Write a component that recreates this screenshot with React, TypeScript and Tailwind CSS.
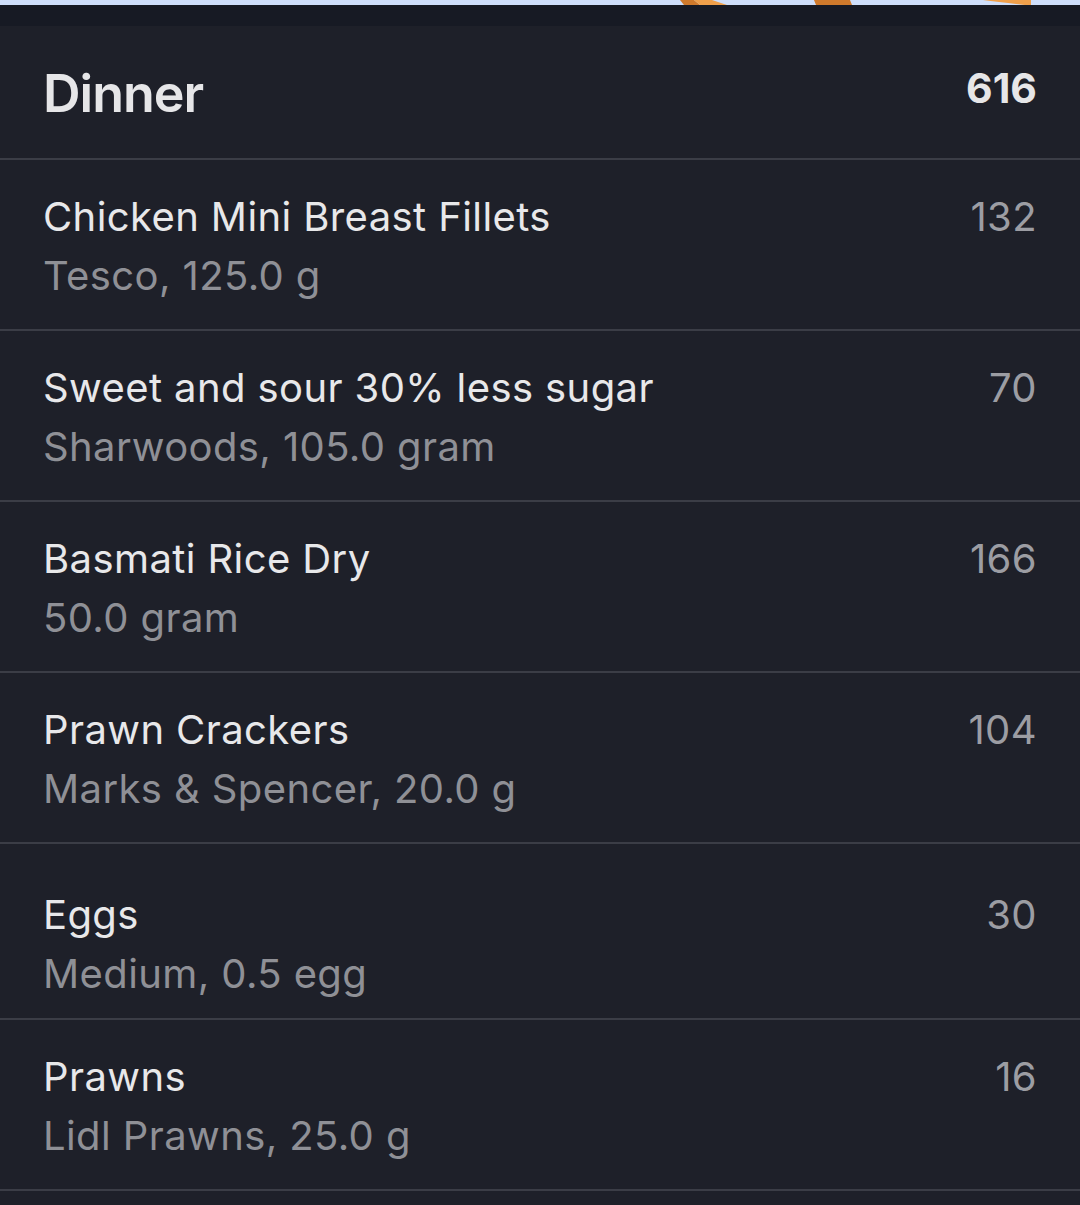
import React from "react";

type Entry = {
  name: string;
  detail: string;
  kcal: number;
  pad?: string;
};

const entries: Entry[] = [
  { name: "Chicken Mini Breast Fillets", detail: "Tesco, 125.0 g", kcal: 132 },
  { name: "Sweet and sour 30% less sugar", detail: "Sharwoods, 105.0 gram", kcal: 70 },
  { name: "Basmati Rice Dry", detail: "50.0 gram", kcal: 166 },
  { name: "Prawn Crackers", detail: "Marks & Spencer, 20.0 g", kcal: 104 },
  { name: "Eggs", detail: "Medium, 0.5 egg", kcal: 30, pad: "pt-[41px] pb-[15px]" },
  { name: "Prawns", detail: "Lidl Prawns, 25.0 g", kcal: 16 },
];

function TopArt() {
  // bottom edge of the illustration above, cropped by the panel
  return (
    <div className="h-[5px] w-full overflow-hidden bg-[#cfdffb]">
      <svg width="1080" height="5" viewBox="0 0 1080 5" className="block">
        <path d="M680 0 L694 0 L700 5 L684 5 Z" fill="#d07a2c" />
        <path d="M694 0 L712 0 L727 5 L700 5 Z" fill="#f0a04b" />
        <path d="M814 0 L850 0 L852 5 L816 5 Z" fill="#d07a2c" />
        <path d="M983 0 L1031 0 L1031 5 L1025 5 Q1000 2 983 0 Z" fill="#f0a04b" />
      </svg>
    </div>
  );
}

function Row({ e }: { e: Entry }) {
  return (
    <div
      className={`flex items-start justify-between border-b-2 border-[#3b3d46] pl-[43px] pr-[43px] tracking-[0.4px] ${
        e.pad ?? "pt-[27px] pb-[24px]"
      }`}
    >
      <div className="min-w-0">
        <div className="text-[40px] leading-[59px] text-[#e8e8ea]">{e.name}</div>
        <div className="text-[40px] leading-[59px] text-[#8f9096]">{e.detail}</div>
      </div>
      <div className="text-[40px] leading-[59px] text-[#9c9da3]">{e.kcal}</div>
    </div>
  );
}

export default function App() {
  return (
    <div
      className="min-h-[1205px] w-[1080px] bg-[#1e2029]"
      style={{ fontFamily: "Inter, 'Noto Sans', sans-serif" }}
    >
      <TopArt />
      <div className="h-[21px] bg-[#171a24]" />
      <div className="flex items-start justify-between border-b-2 border-[#3b3d46] pb-[38px] pl-[43px] pr-[43px] pt-[42px]">
        <h1 className="text-[52px] font-semibold leading-[52px] tracking-[-1px] text-[#e6e6e8]">Dinner</h1>
        <span className="text-[41px] font-bold leading-[41px] text-[#e6e6e8]">616</span>
      </div>
      {entries.map((e) => (
        <Row key={e.name} e={e} />
      ))}
    </div>
  );
}
